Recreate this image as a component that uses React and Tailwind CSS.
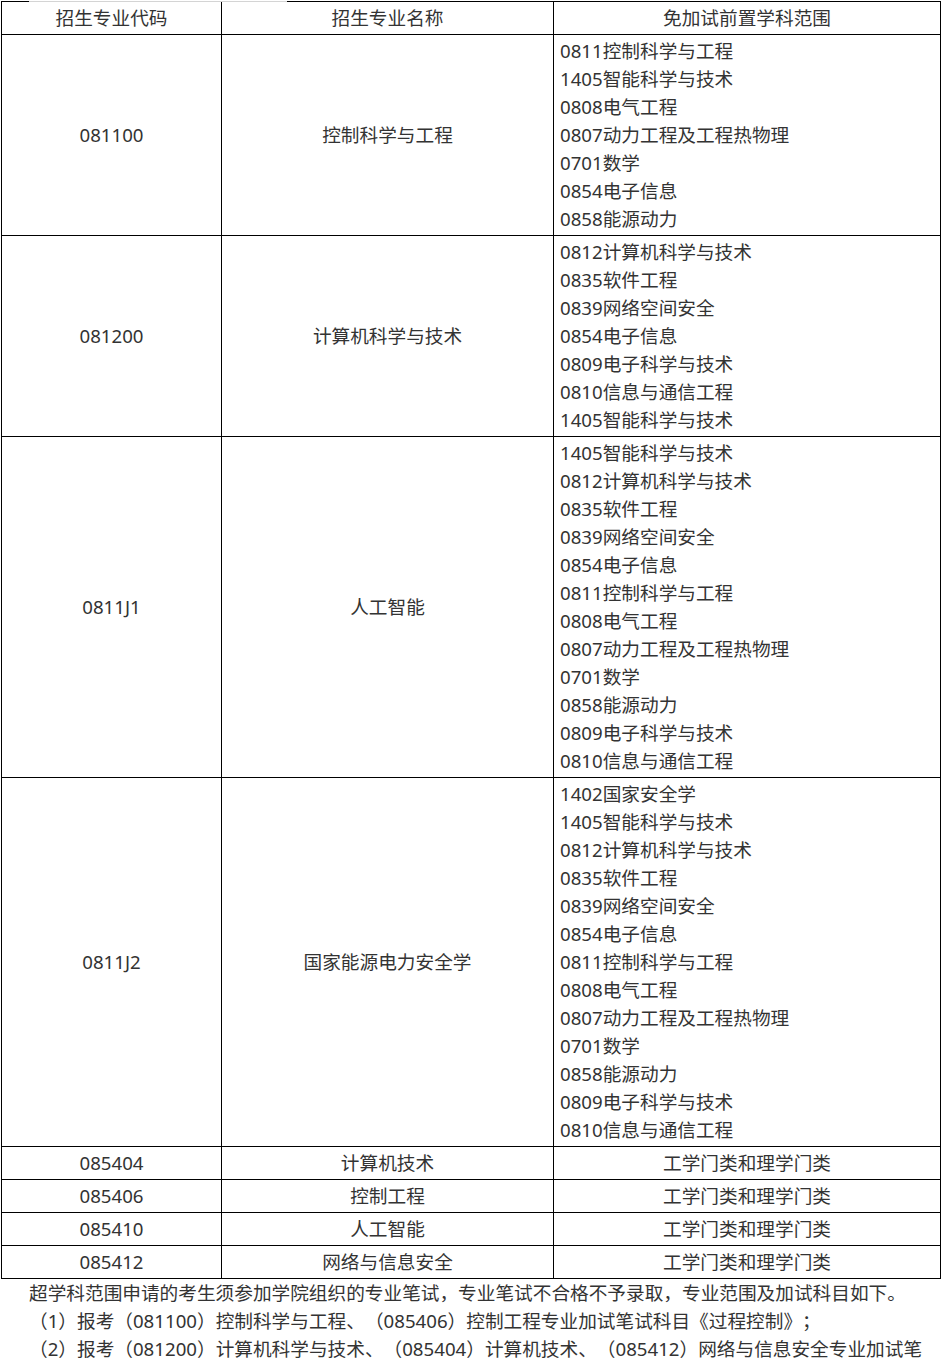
import React from "react";

const bigRows = [
  {
    code: "081100",
    name: "控制科学与工程",
    scope: [
      "0811控制科学与工程",
      "1405智能科学与技术",
      "0808电气工程",
      "0807动力工程及工程热物理",
      "0701数学",
      "0854电子信息",
      "0858能源动力",
    ],
  },
  {
    code: "081200",
    name: "计算机科学与技术",
    scope: [
      "0812计算机科学与技术",
      "0835软件工程",
      "0839网络空间安全",
      "0854电子信息",
      "0809电子科学与技术",
      "0810信息与通信工程",
      "1405智能科学与技术",
    ],
  },
  {
    code: "0811J1",
    name: "人工智能",
    scope: [
      "1405智能科学与技术",
      "0812计算机科学与技术",
      "0835软件工程",
      "0839网络空间安全",
      "0854电子信息",
      "0811控制科学与工程",
      "0808电气工程",
      "0807动力工程及工程热物理",
      "0701数学",
      "0858能源动力",
      "0809电子科学与技术",
      "0810信息与通信工程",
    ],
  },
  {
    code: "0811J2",
    name: "国家能源电力安全学",
    scope: [
      "1402国家安全学",
      "1405智能科学与技术",
      "0812计算机科学与技术",
      "0835软件工程",
      "0839网络空间安全",
      "0854电子信息",
      "0811控制科学与工程",
      "0808电气工程",
      "0807动力工程及工程热物理",
      "0701数学",
      "0858能源动力",
      "0809电子科学与技术",
      "0810信息与通信工程",
    ],
  },
];

const smallRows = [
  { code: "085404", name: "计算机技术" },
  { code: "085406", name: "控制工程" },
  { code: "085410", name: "人工智能" },
  { code: "085412", name: "网络与信息安全" },
];

const cell = "border border-black px-[6px] py-[2px] align-middle";

export default function App() {
  return (
    <div
      className="bg-white text-[#333] text-[18.67px] leading-[28px] w-[942px] [text-spacing-trim:space-all]"
      style={{ fontFamily: '"Noto Sans", "Noto Sans CJK SC", sans-serif' }}
    >
      <div className="relative">
        <div className="absolute top-0 left-[29px] w-[258px] h-px bg-[#d4d4d4]" />
      </div>
      <table className="table-fixed border-collapse w-[939px] ml-px mt-px">
        <colgroup>
          <col className="w-[220px]" />
          <col className="w-[332px]" />
          <col className="w-[387px]" />
        </colgroup>
        <thead>
          <tr>
            <th className={`${cell} font-normal text-center`}>招生专业代码</th>
            <th className={`${cell} font-normal text-center`}>招生专业名称</th>
            <th className={`${cell} font-normal text-center`}>免加试前置学科范围</th>
          </tr>
        </thead>
        <tbody>
          {bigRows.map((r) => (
            <tr key={r.code}>
              <td className={`${cell} text-center`}>{r.code}</td>
              <td className={`${cell} text-center`}>{r.name}</td>
              <td className={`${cell} text-left`}>
                {r.scope.map((s, i) => (
                  <div key={i}>{s}</div>
                ))}
              </td>
            </tr>
          ))}
          {smallRows.map((r) => (
            <tr key={r.code}>
              <td className={`${cell} text-center`}>{r.code}</td>
              <td className={`${cell} text-center`}>{r.name}</td>
              <td className={`${cell} text-center`}>工学门类和理学门类</td>
            </tr>
          ))}
        </tbody>
      </table>
      <div className="pl-[29px] whitespace-nowrap">
        <p>超学科范围申请的考生须参加学院组织的专业笔试，专业笔试不合格不予录取，专业范围及加试科目如下。</p>
        <p>（1）报考（081100）控制科学与工程、（085406）控制工程专业加试笔试科目《过程控制》；</p>
        <p>（2）报考（081200）计算机科学与技术、（085404）计算机技术、（085412）网络与信息安全专业加试笔</p>
      </div>
    </div>
  );
}
